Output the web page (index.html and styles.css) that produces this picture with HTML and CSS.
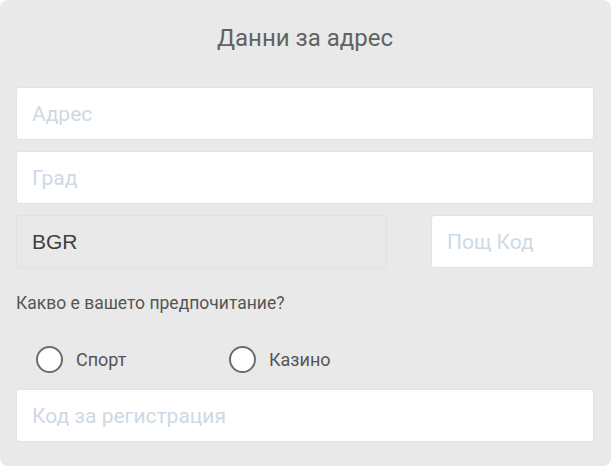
FILE: index.html
```html
<!DOCTYPE html>
<html lang="bg">
<head>
<meta charset="utf-8">
<title>Данни за адрес</title>
<link rel="stylesheet" href="styles.css">
</head>
<body>
<form class="card">
  <h2 class="title">Данни за адрес</h2>
  <div class="fields">
    <input class="field" type="text" placeholder="Адрес">
    <input class="field" type="text" placeholder="Град">
    <div class="row">
      <input class="field field-disabled" type="text" value="BGR" disabled>
      <input class="field" type="text" placeholder="Пощ Код">
    </div>
  </div>
  <p class="question">Какво е вашето предпочитание?</p>
  <div class="radios">
    <label class="radio"><input type="radio" name="pref"><span>Спорт</span></label>
    <label class="radio"><input type="radio" name="pref"><span>Казино</span></label>
  </div>
  <input class="field field-code" type="text" placeholder="Код за регистрация">
</form>
</body>
</html>
```

FILE: styles.css
```css
html, body {
  margin: 0;
  padding: 0;
  background: #ffffff;
}

body {
  font-family: Roboto, "Liberation Sans", sans-serif;
}

.card {
  box-sizing: border-box;
  width: 611px;
  height: 466px;
  background: #e9e9e9;
  border-radius: 8px;
  padding: 24px 17px 24px 16px;
  display: flex;
  flex-direction: column;
}

.title {
  margin: 0 0 35px;
  font-size: 24px;
  line-height: 28px;
  font-weight: 400;
  color: #626262;
  text-align: center;
}

.fields {
  display: flex;
  flex-direction: column;
  gap: 11px;
}

.field {
  box-sizing: border-box;
  display: block;
  width: 100%;
  height: 53px;
  margin: 0;
  padding: 0 15px;
  border: 1px solid #e2e2e2;
  border-radius: 3px;
  background: #ffffff;
  font-family: Roboto, "Liberation Sans", sans-serif;
  font-size: 21px;
  color: #444444;
  outline: none;
}

.field::placeholder {
  color: #cdd9e4;
  opacity: 1;
}

.row {
  display: grid;
  grid-template-columns: 371px 163px;
  column-gap: 44px;
}

.field-disabled {
  background: #e9e9e9;
  border-color: #e1e1e1;
  font-family: "Liberation Sans", Arial, sans-serif;
  font-size: 21px;
  color: #3f3f3f;
  -webkit-text-fill-color: #3f3f3f;
}

.question {
  margin: 25px 0 0;
  font-size: 17.5px;
  line-height: 21px;
  color: #555555;
}

.radios {
  display: flex;
  margin: 32px 0 16px;
  padding-left: 20px;
}

.radio {
  display: flex;
  align-items: center;
  gap: 13px;
  width: 193px;
  font-size: 18px;
  line-height: 27px;
  color: #555555;
}

.radio input {
  -webkit-appearance: none;
  appearance: none;
  box-sizing: border-box;
  width: 27px;
  height: 27px;
  margin: 0;
  border: 2.5px solid #6c6c6c;
  border-radius: 50%;
  background: #ffffff;
}
```
